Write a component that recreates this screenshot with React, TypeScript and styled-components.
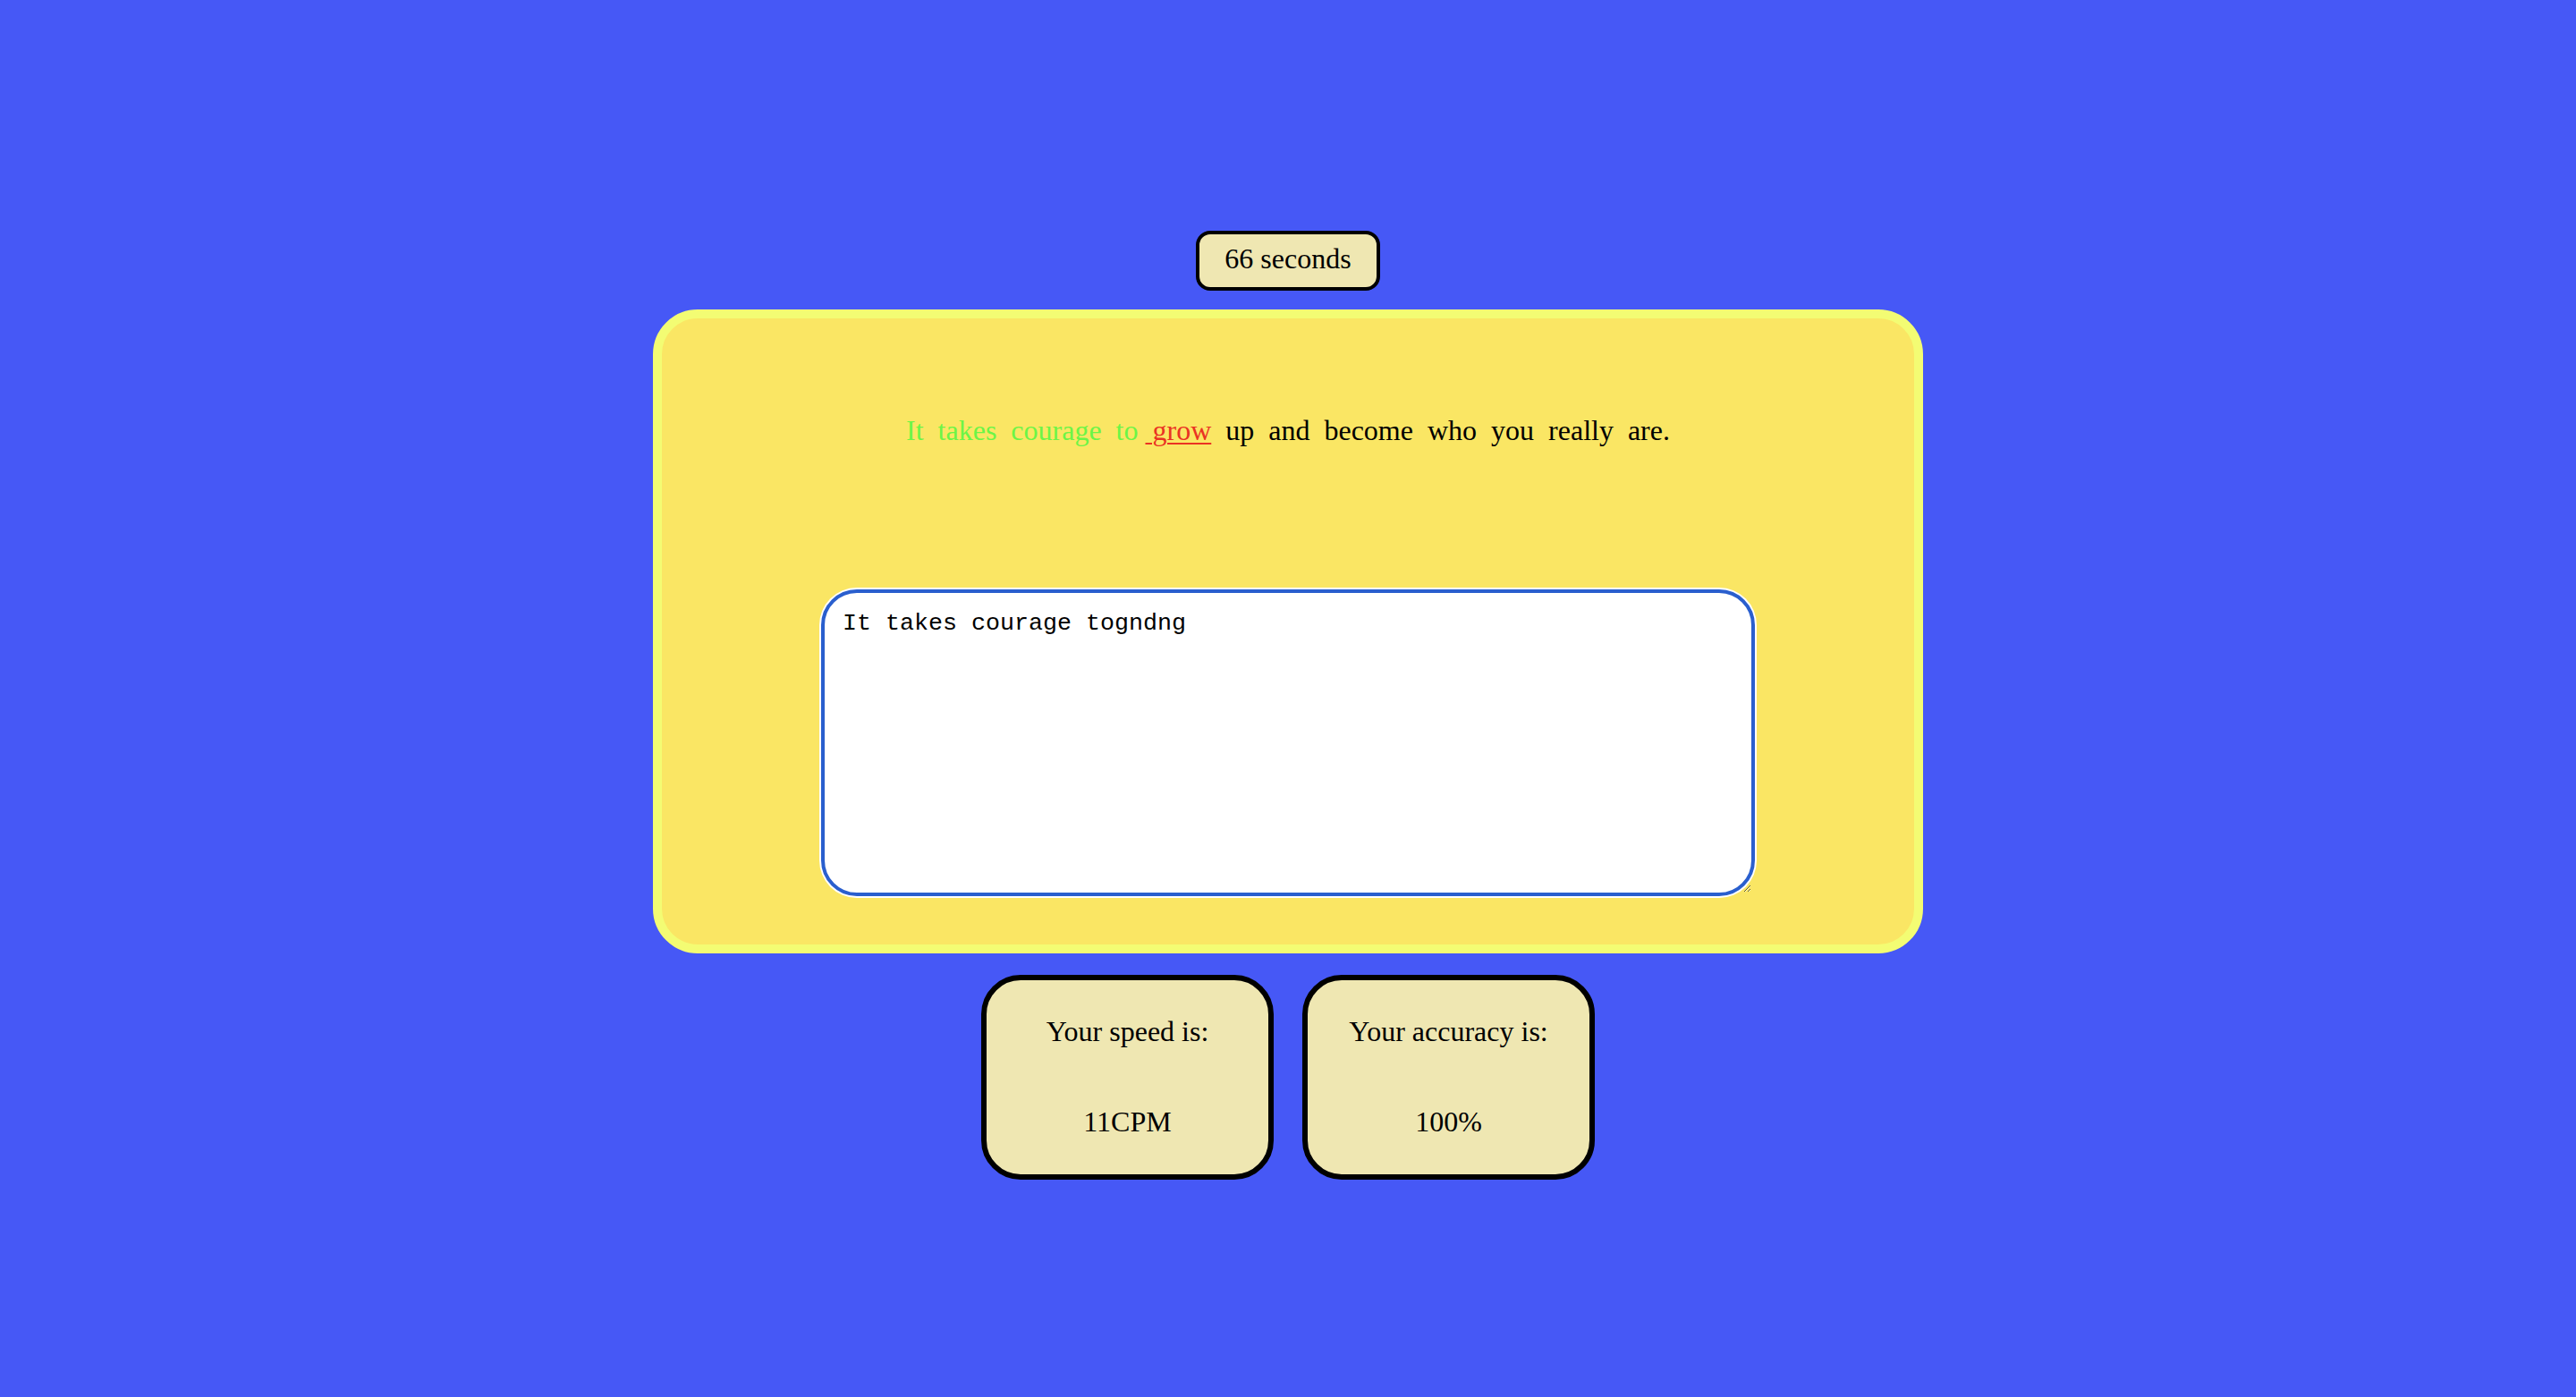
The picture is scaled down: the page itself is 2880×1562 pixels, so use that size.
import React, { useEffect, useRef } from "react";
import styled, { createGlobalStyle } from "styled-components";

const GlobalStyle = createGlobalStyle`
  html, body {
    margin: 0;
    padding: 0;
    background: #4658f6;
    overflow: hidden;
  }
  body {
    font-family: "Liberation Serif", "Times New Roman", serif;
  }
`;

const Page = styled.main`
  height: 1562px;
  overflow: hidden;
  box-sizing: border-box;
  padding-top: 258px;
  display: flex;
  flex-direction: column;
  align-items: center;
  background: #4658f6;
`;

const Timer = styled.div`
  border: 4px solid #000;
  border-radius: 16px;
  background: #efe7b2;
  padding: 9px 28px 13px;
  font-size: 32px;
  line-height: 37px;
  color: #000;
`;

const Card = styled.section`
  margin-top: 21px;
  width: 1420px;
  height: 720px;
  flex-shrink: 0;
  box-sizing: border-box;
  border: 10px solid #f3fc73;
  border-radius: 50px;
  background: #fae664;
  display: flex;
  flex-direction: column;
  align-items: center;
`;

const Sentence = styled.p`
  margin: 107px 0 0;
  font-size: 32px;
  line-height: 37px;
  white-space: pre;
  color: #000;
`;

const Word = styled.span<{ $state: "done" | "current" | "todo" }>`
  color: ${(p) => (p.$state === "done" ? "#6cf546" : p.$state === "current" ? "#ea3323" : "#000")};
  text-decoration: ${(p) => (p.$state === "current" ? "underline" : "none")};
  text-decoration-thickness: 2px;
  text-underline-offset: 3px;
`;

const Input = styled.textarea`
  margin-top: 159px;
  width: 1044px;
  height: 343px;
  box-sizing: border-box;
  border: 4px solid #2a5fce;
  border-radius: 40px;
  box-shadow: 0 0 0 2px #fff;
  outline: none;
  background: #fff;
  padding: 19px 20px 20px;
  font-family: "Liberation Mono", "Courier New", monospace;
  font-size: 26.67px;
  line-height: 30px;
  color: #000;
  caret-color: #000;
`;

const Stats = styled.div`
  margin-top: 24px;
  display: flex;
  gap: 32px;
`;

const StatBox = styled.div`
  width: 327px;
  height: 229px;
  box-sizing: border-box;
  border: 6px solid #000;
  border-radius: 44px;
  background: #efe7b2;
  padding: 39px 0 41px;
  display: flex;
  flex-direction: column;
  align-items: center;
  gap: 64px;
`;

const StatText = styled.p`
  margin: 0;
  font-size: 32px;
  line-height: 37px;
  color: #000;
`;

const words = "It takes courage to grow up and become who you really are.".split(" ");
const currentIndex = 4;

export default function App() {
  const ref = useRef<HTMLTextAreaElement>(null);
  useEffect(() => {
    const el = ref.current;
    if (el) {
      el.focus();
      const len = el.value.length;
      el.setSelectionRange(len, len);
    }
  }, []);

  return (
    <>
      <GlobalStyle />
      <Page>
        <Timer>66 seconds</Timer>
        <Card>
          <Sentence>
            {words.map((w, i) => {
              const state = i < currentIndex ? "done" : i === currentIndex ? "current" : "todo";
              const sep = i === 0 ? "" : i === currentIndex ? " " : "  ";
              return (
                <React.Fragment key={i}>
                  {sep}
                  <Word $state={state}>{i === currentIndex ? "\u00a0" + w : w}</Word>
                </React.Fragment>
              );
            })}
          </Sentence>
          <Input ref={ref} defaultValue="It takes courage togndng" spellCheck />
        </Card>
        <Stats>
          <StatBox>
            <StatText>Your speed is:</StatText>
            <StatText>11CPM</StatText>
          </StatBox>
          <StatBox>
            <StatText>Your accuracy is:</StatText>
            <StatText>100%</StatText>
          </StatBox>
        </Stats>
      </Page>
    </>
  );
}
